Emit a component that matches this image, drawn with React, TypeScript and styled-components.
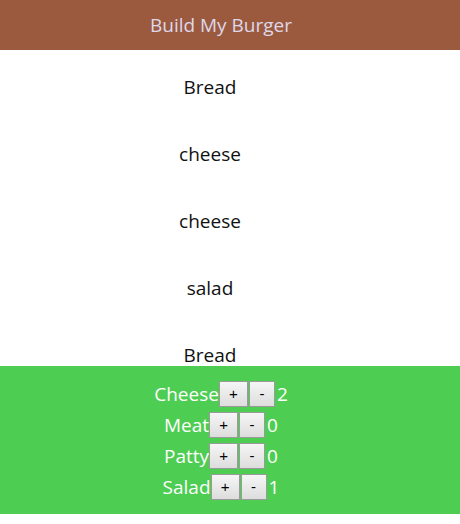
import React, { useState } from "react";
import styled, { createGlobalStyle } from "styled-components";

const Global = createGlobalStyle`
  html, body { margin: 0; padding: 0; background: #ffffff; }
  body { font-family: "Open Sans", "Noto Sans", sans-serif; }
  * { box-sizing: border-box; }
`;

const Header = styled.header`
  height: 50px;
  background: #9b5a3e;
  color: #ddd8ea;
  font-size: 19px;
  display: flex;
  align-items: center;
  justify-content: center;
  padding-right: 18px;
`;

const Burger = styled.div`
  height: 316px;
  overflow: hidden;
  display: flex;
  flex-direction: column;
  padding: 3px 40px 0 0;
`;

const Layer = styled.div`
  height: 67px;
  flex: 0 0 67px;
  display: flex;
  align-items: center;
  justify-content: center;
  font-size: 19px;
  color: #111;
`;

const Controls = styled.div`
  background: #4dcd51;
  height: 148px;
  padding: 12px 18px 0 0;
  display: flex;
  flex-direction: column;
  align-items: center;
`;

const Row = styled.div`
  height: 31px;
  display: flex;
  align-items: center;
  justify-content: center;
  color: #ffffff;
  font-size: 19px;
`;

const Btn = styled.button<{ $w: number }>`
  width: ${(p) => p.$w}px;
  height: 26px;
  border: 1px solid #9a9a9a;
  background: linear-gradient(#f6f6f6, #dddddd);
  font-family: "Liberation Sans", Arial, sans-serif;
  font-size: 15px;
  color: #000;
  padding: 0;
  margin: 0 1px 0 0;
  display: flex;
  align-items: center;
  justify-content: center;
`;

const Count = styled.span`
  margin-left: 1px;
`;

export default function App() {
  const [counts, setCounts] = useState<Record<string, number>>({
    Cheese: 2,
    Meat: 0,
    Patty: 0,
    Salad: 1,
  });
  const layers = ["Bread", "cheese", "cheese", "salad", "Bread"];
  const change = (k: string, d: number) =>
    setCounts((c) => ({ ...c, [k]: Math.max(0, c[k] + d) }));
  return (
    <>
      <Global />
      <Header>Build My Burger</Header>
      <Burger>
        {layers.map((l, i) => (
          <Layer key={i}>{l}</Layer>
        ))}
      </Burger>
      <Controls>
        {Object.keys(counts).map((k) => (
          <Row key={k}>
            {k}
            <Btn $w={29} onClick={() => change(k, 1)}>+</Btn>
            <Btn $w={26} onClick={() => change(k, -1)}>-</Btn>
            <Count>{counts[k]}</Count>
          </Row>
        ))}
      </Controls>
    </>
  );
}
